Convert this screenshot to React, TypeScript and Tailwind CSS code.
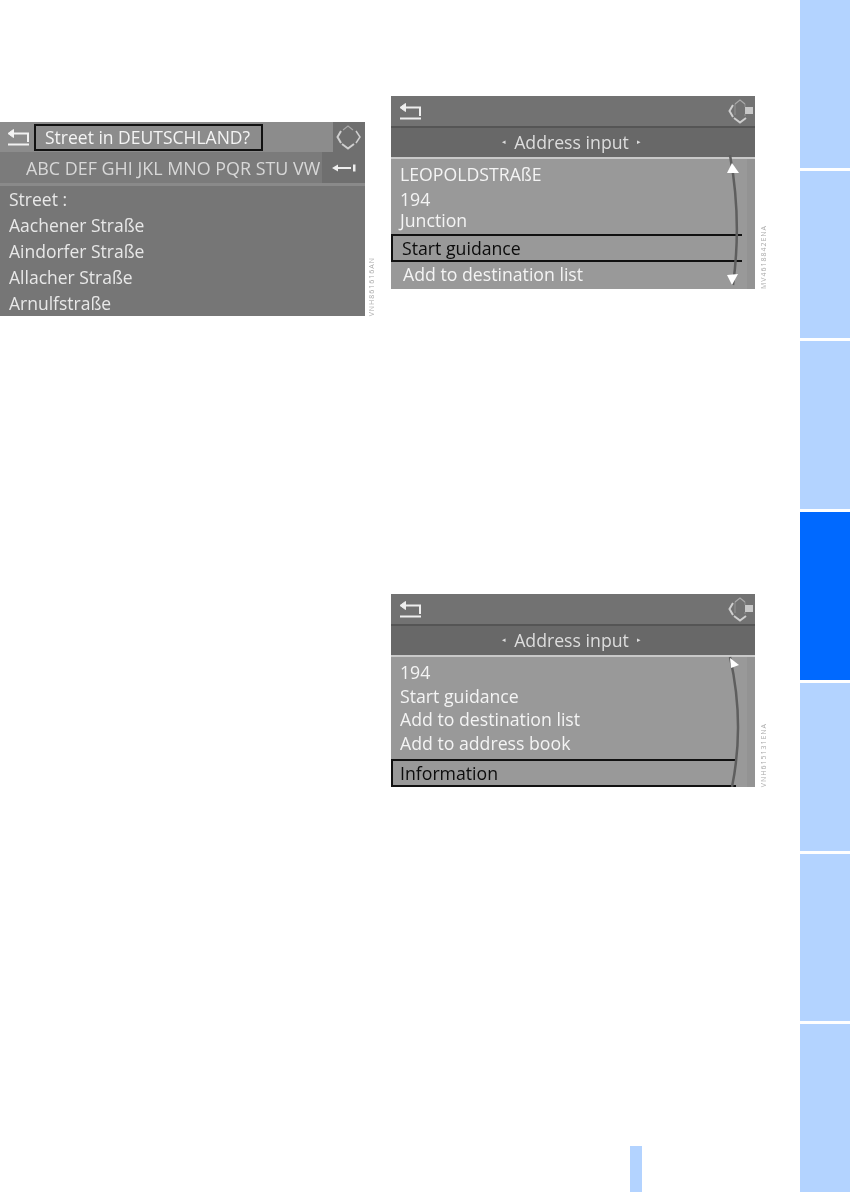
const tabs = [false, false, false, true, false, false, false];

function BackIcon() {
  return (
    <svg width="24" height="18" viewBox="0 0 24 18" fill="none" stroke="currentColor" strokeWidth="2">
      <path d="M2 16.5h21M22 14V5.5H6" />
      <path d="M7.5 1.5 2 5.5l5.5 4z" fill="currentColor" strokeWidth="1" />
    </svg>
  );
}

function NavIcon({ active }: { active?: boolean }) {
  return (
    <svg width="26" height="26" viewBox="0 0 26 26" fill="none" stroke="#cfcfcf" strokeWidth="2">
      <path d="M7 6 12 2l5 4" strokeWidth="1.2" opacity="0.6" />
      {active && <path d="M7 6v11M17 6v3M17 16v2" strokeWidth="1" opacity="0.35" />}
      <path d="M5 7 1.5 13 5 19" />
      <path d="M6 20l6 4.5 6-4.5" />
      {active ? <rect x="17" y="9" width="8" height="7" fill="#c8c8c8" stroke="none" /> : <path d="M20 7l4 6-4 6" strokeWidth="1.5" />}
    </svg>
  );
}

function Caption({ text }: { text: string }) {
  return (
    <span className="ml-[5px] self-end whitespace-nowrap text-[7px] leading-[8px] tracking-[1px] text-[#aaaaaa] rotate-180 [writing-mode:vertical-rl] blur-[0.5px]">
      {text}
    </span>
  );
}

function ScrollArc({ variant }: { variant: "both" | "up" }) {
  if (variant === "both") {
    return (
      <svg width="20" height="134" viewBox="0 0 20 134" fill="none" className="block">
        <path d="M5 0Q17 65 8 130" stroke="#5e5e5e" strokeWidth="2.5" />
        <path d="M7 8 2 18h12z" fill="#ffffff" />
        <path d="M7 130 2 120l11-1z" fill="#ffffff" />
      </svg>
    );
  }
  return (
    <svg width="20" height="134" viewBox="0 0 20 134" fill="none" className="block">
      <path d="M5 4Q20 70 7 134" stroke="#5e5e5e" strokeWidth="2.5" />
      <path d="M5 5l9 7-8 3z" fill="#ffffff" />
    </svg>
  );
}

type Row = { label: string; h: string; selected?: boolean };

function AddressPanel({ rows, arc, selectedClass, caption }: { rows: Row[]; arc: "both" | "up"; selectedClass: string; caption: string }) {
  return (
    <div className="flex">
      <div className="flex h-[193px] w-[364px] flex-col overflow-hidden bg-[#999999] text-[17.7px] leading-[20px] font-medium">
        <div className="flex h-[32px] shrink-0 items-center justify-between border-b-[2px] border-[#555555] bg-[#727272] pl-[7px] pr-[1px] text-[#eeeeee] blur-[0.4px]">
          <BackIcon />
          <NavIcon active />
        </div>
        <div className="flex h-[31px] shrink-0 items-center justify-center gap-[8px] border-b-[2px] border-b-[#c9c9c9] bg-[#686868] pb-[2px] pr-[3px] text-[#dddddd]">
          <span className="text-[7px] blur-[0.4px]">◂</span>
          <span className="blur-[0.6px]">Address input</span>
          <span className="text-[7px] blur-[0.4px]">▸</span>
        </div>
        <div className="relative flex flex-1 flex-col pt-[2px] text-[#f4f4f4]">
          <div className="absolute bottom-0 right-0 top-0 w-[8px] bg-[#939393]" />
          {rows.map((row) =>
            row.selected ? (
              <div key={row.label} className={`${row.h} ${selectedClass} relative flex shrink-0 items-center border-l-2 border-t-2 border-[#111111] text-[#0c0c0c]`}>
                <span className="blur-[0.6px]">{row.label}</span>
              </div>
            ) : (
              <div key={row.label} className={`${row.h} flex shrink-0 items-center pl-[9px]`}>
                <span className="blur-[0.6px]">{row.label}</span>
              </div>
            ),
          )}
          <div className="absolute right-[10px] top-[-4px] blur-[0.3px]">
            <ScrollArc variant={arc} />
          </div>
        </div>
      </div>
      <Caption text={caption} />
    </div>
  );
}

export default function App() {
  return (
    <div className="flex h-[1192px] w-[850px] overflow-hidden bg-white font-['Open_Sans',sans-serif]">
      <main className="relative flex flex-1 gap-[11px]">
        <section className="flex w-[380px] items-start pt-[122px]">
          <div className="flex h-[194px] w-[365px] shrink-0 flex-col bg-[#767676] text-[17.5px] font-medium text-[#e8e8e8]">
            <div className="flex h-[30px] shrink-0 items-center bg-[#8c8c8c]">
              <div className="flex h-full w-[34px] items-center justify-center pl-[2px] text-[#f2f2f2] blur-[0.4px]">
                <BackIcon />
              </div>
              <div className="flex h-[27px] w-[229px] items-center border-2 border-[#111111] pl-[9px] text-[#f4f4f4]">
                <span className="blur-[0.6px]">Street in DEUTSCHLAND?</span>
              </div>
              <div className="h-full flex-1" />
              <div className="flex h-full w-[32px] items-center justify-center bg-[#6f6f6f] blur-[0.4px]">
                <NavIcon />
              </div>
            </div>
            <div className="flex h-[34px] shrink-0 items-center border-b-[3px] border-[#8a8a8a] bg-[#7b7b7b] pl-[26px] text-[#d8d8d8]">
              <span className="w-[296px] whitespace-nowrap pt-[2px] text-[17.9px] blur-[0.6px]">ABC DEF GHI JKL MNO PQR STU VW</span>
              <div className="flex h-full flex-1 items-center justify-center bg-[#6f6f6f]">
                <svg width="24" height="8" viewBox="0 0 24 8" fill="#eeeeee" className="blur-[0.3px]">
                  <path d="M0 4 6 0.5v2.5h13v2H6v2.5z" />
                  <rect x="21" y="0.5" width="2.5" height="7" />
                </svg>
              </div>
            </div>
            <div className="flex flex-col pl-[9px]">
              {["Street :", "Aachener Straße", "Aindorfer Straße", "Allacher Straße", "Arnulfstraße"].map((row) => (
                <div key={row} className="flex h-[26px] items-center">
                  <span className="blur-[0.6px]">{row}</span>
                </div>
              ))}
            </div>
          </div>
          <div className="-ml-[2px] flex h-[194px] shrink-0">
            <Caption text="VNH861616AN" />
          </div>
        </section>
        <section className="flex flex-col gap-[305px] pt-[96px]">
          <AddressPanel
            arc="both"
            caption="MV4618842ENA"
            selectedClass="mt-[4px] mr-[13px] border-b-2 pl-[9px]"
            rows={[
              { label: "LEOPOLDSTRAßE", h: "h-[26px]" },
              { label: "194", h: "h-[23px]" },
              { label: "Junction", h: "h-[20px]" },
              { label: "Start guidance", h: "h-[28px]", selected: true },
              { label: "Add to destination list", h: "h-[23px] !pl-[12px]" },
            ]}
          />
          <AddressPanel
            arc="up"
            caption="VNH615131ENA"
            selectedClass="mt-[4px] mr-[19px] border-b-[3px] pl-[7px]"
            rows={[
              { label: "194", h: "h-[25px]" },
              { label: "Start guidance", h: "h-[23px]" },
              { label: "Add to destination list", h: "h-[24px]" },
              { label: "Add to address book", h: "h-[24px]" },
              { label: "Information", h: "h-[29px]", selected: true },
            ]}
          />
        </section>
        <div className="absolute bottom-0 left-[630px] h-[46px] w-[12px] bg-[#b3d3ff]" />
      </main>
      <nav className="flex w-[50px] shrink-0 flex-col gap-[3px]">
        {tabs.map((active, i) => (
          <div key={i} className={active ? "h-[168px] bg-[#0069ff]" : "h-[168px] bg-[#b3d3ff]"} />
        ))}
      </nav>
    </div>
  );
}
